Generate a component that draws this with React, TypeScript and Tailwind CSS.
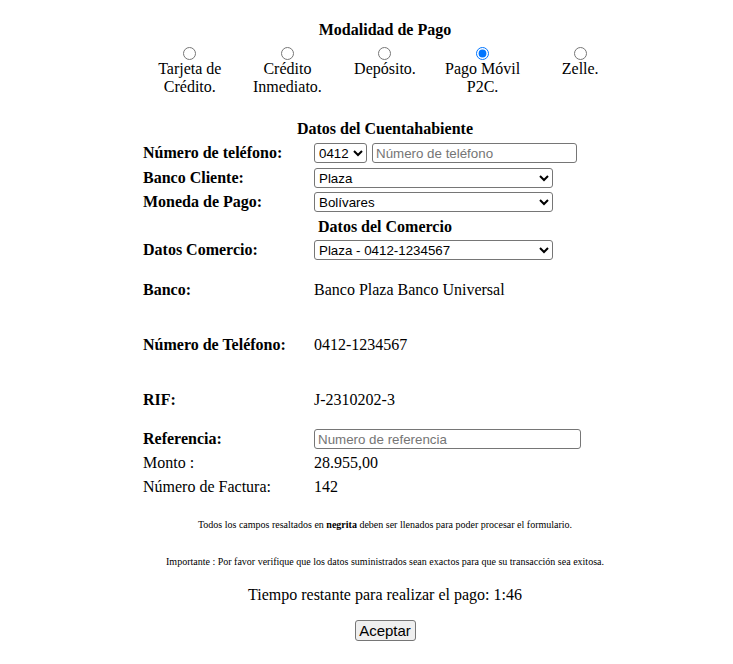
const metodos = [
  ["Tarjeta de", "Crédito."],
  ["Crédito", "Inmediato."],
  ["Depósito."],
  ["Pago Móvil", "P2C."],
  ["Zelle."],
];

const campo = "h-[20px] border border-[#767676] rounded-[3px] bg-white text-[13.33px] font-['Liberation_Sans',Arial,sans-serif] text-black";

export default function App() {
  return (
    <div className="min-h-screen w-[733px] bg-white font-['Liberation_Serif','Times_New_Roman',serif] text-[16px] leading-[18px] text-black">
      <div className="pt-[21px] w-[488px] ml-[141px]">
        <h3 className="text-center font-bold">Modalidad de Pago</h3>
        <div className="grid grid-cols-5 mt-[8px]">
          {metodos.map((m, i) => (
            <label key={i} className="flex flex-col items-center text-center">
              <input type="radio" name="modalidad" defaultChecked={i === 3} className="w-[13px] h-[13px] m-0" />
              {m.map((l) => (
                <span key={l}>{l}</span>
              ))}
            </label>
          ))}
        </div>
        <h3 className="text-center font-bold mt-[24px]">Datos del Cuentahabiente</h3>
      </div>

      <div className="ml-[143px] mt-[5px]">
        <div className="flex items-center h-[20px]">
          <span className="w-[171px] font-bold">Número de teléfono:</span>
          <select className={`${campo} w-[53px]`} defaultValue="0412">
            <option>0412</option>
          </select>
          <input className={`${campo} w-[205px] ml-[5px] px-[3px] placeholder:text-[#757575]`} placeholder="Número de teléfono" />
        </div>
        <div className="flex items-center h-[20px] mt-[5px]">
          <span className="w-[171px] font-bold">Banco Cliente:</span>
          <select className={`${campo} w-[239px]`}>
            <option>Plaza</option>
          </select>
        </div>
        <div className="flex items-center h-[20px] mt-[4px]">
          <span className="w-[171px] font-bold">Moneda de Pago:</span>
          <select className={`${campo} w-[239px]`}>
            <option>Bolívares</option>
          </select>
        </div>
        <div className="pl-[175px] h-[22px] mt-[4px] flex items-center font-bold">Datos del Comercio</div>
        <div className="flex items-center h-[20px] mt-[2px]">
          <span className="w-[171px] font-bold">Datos Comercio:</span>
          <select className={`${campo} w-[239px]`}>
            <option>Plaza - 0412-1234567</option>
          </select>
        </div>

        <div className="flex items-center mt-[21px] h-[18px]">
          <span className="w-[171px] font-bold">Banco:</span>
          <span>Banco Plaza Banco Universal</span>
        </div>
        <div className="flex items-center mt-[37px] h-[18px]">
          <span className="w-[171px] font-bold">Número de Teléfono:</span>
          <span>0412-1234567</span>
        </div>
        <div className="flex items-center mt-[37px] h-[18px]">
          <span className="w-[171px] font-bold">RIF:</span>
          <span>J-2310202-3</span>
        </div>
        <div className="flex items-center mt-[20px] h-[20px]">
          <span className="w-[171px] font-bold">Referencia:</span>
          <input className={`${campo} w-[267px] px-[3px] placeholder:text-[#757575]`} placeholder="Numero de referencia" />
        </div>
        <div className="flex items-center mt-[5px] h-[18px]">
          <span className="w-[171px]">Monto :</span>
          <span>28.955,00</span>
        </div>
        <div className="flex items-center mt-[6px] h-[18px]">
          <span className="w-[171px]">Número de Factura:</span>
          <span>142</span>
        </div>
      </div>

      <div className="w-[488px] ml-[141px] text-center">
        <p className="text-[10px] leading-[12px] mt-[23px]">
          Todos los campos resaltados en <b>negrita</b> deben ser llenados para poder procesar el formulario.
        </p>
        <p className="text-[10px] leading-[12px] mt-[25px]">
          Importante : Por favor verifique que los datos suministrados sean exactos para que su transacción sea exitosa.
        </p>
        <p className="text-[16px] leading-[20px] mt-[17px]">Tiempo restante para realizar el pago: 1:46</p>
        <button className="mt-[15px] w-[61px] h-[21px] border border-[#767676] rounded-[3px] bg-[#efefef] text-[15px] font-['Liberation_Sans',Arial,sans-serif]">
          Aceptar
        </button>
      </div>
    </div>
  );
}
